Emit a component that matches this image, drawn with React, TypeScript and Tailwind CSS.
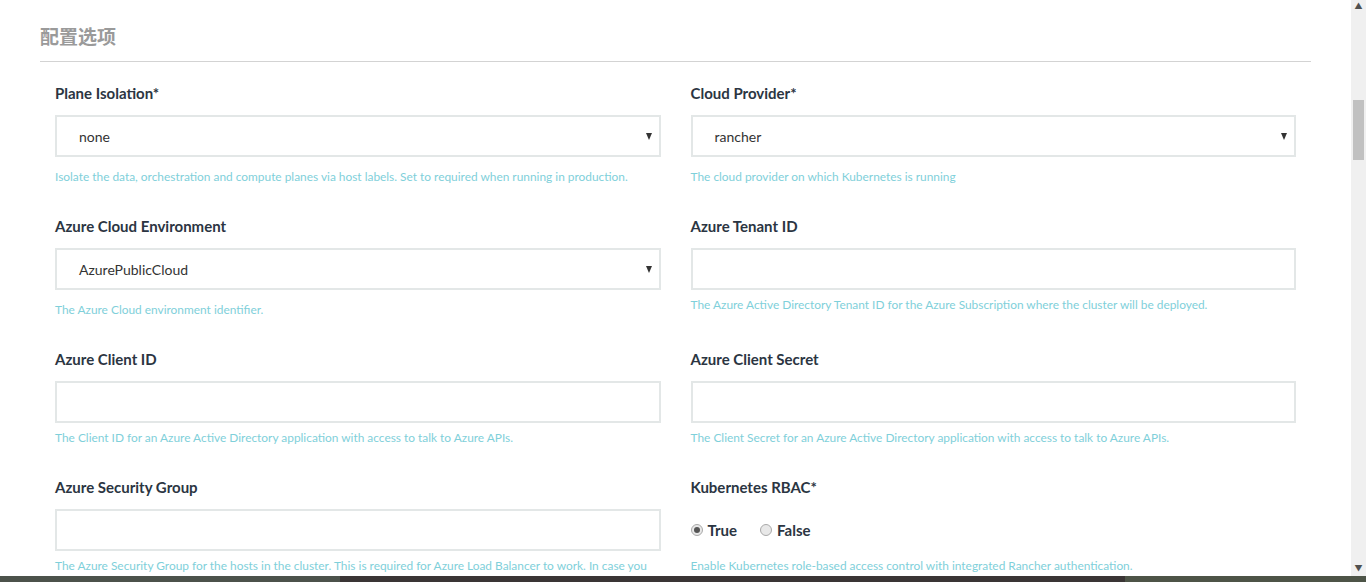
import type { ReactNode } from 'react';

const font = { fontFamily: 'Lato, "Noto Sans CJK SC", sans-serif' };

function Label({ children }: { children: ReactNode }) {
  return <div className="h-5 text-[15px] leading-5 font-bold text-[#2b3542]">{children}</div>;
}

function Help({ children, extra }: { children: ReactNode; extra?: boolean }) {
  return (
    <p className={`${extra ? 'mt-[11px]' : 'mt-[6px]'} text-[11.9px] leading-[18px] text-[#7fd0da]`}>{children}</p>
  );
}

function SelectBox({ value }: { value: string }) {
  return (
    <div className="flex h-[42px] items-center justify-between border-2 border-[#e3e7e7] bg-white pl-[22px] pr-[7px]">
      <span className="text-[14px] text-[#333]">{value}</span>
      <span className="h-0 w-0 border-x-[3.5px] border-t-[7px] border-x-transparent border-t-[#333]" />
    </div>
  );
}

function TextBox() {
  return <div className="h-[42px] border-2 border-[#e3e7e7] bg-white" />;
}

function Field({ label, help, select }: { label: string; help: string; select?: string }) {
  return (
    <div className="px-[15px]">
      <Label>{label}</Label>
      <div className="mt-3">{select ? <SelectBox value={select} /> : <TextBox />}</div>
      <Help extra={!!select}>{help}</Help>
    </div>
  );
}

function Radio({ checked, label }: { checked?: boolean; label: string }) {
  return (
    <div className="flex items-center gap-[5px]">
      <span className="flex h-3 w-3 items-center justify-center rounded-full border border-[#a9a9a9] bg-[#e8e8e8]">
        {checked && <span className="h-[6px] w-[6px] rounded-full bg-[#555]" />}
      </span>
      <span className="text-[15px] font-bold text-[#2b3542]">{label}</span>
    </div>
  );
}

export default function App() {
  return (
    <div className="w-[1366px] overflow-hidden bg-white" style={font}>
      <div className="flex h-[576px]">
        <div className="flex-1 overflow-hidden px-10 pt-[25px]">
          <h2 className="text-[19px] leading-6 font-bold text-[#9a9a9a]">配置选项</h2>
          <div className="mt-[12px] h-px bg-[#d3d3d3]" />

          <div className="pt-[21px]">
            <div className="mb-[30px] grid grid-cols-2">
              <Field label="Plane Isolation*" select="none" help="Isolate the data, orchestration and compute planes via host labels. Set to required when running in production." />
              <Field label="Cloud Provider*" select="rancher" help="The cloud provider on which Kubernetes is running" />
            </div>
            <div className="mb-[30px] grid grid-cols-2 items-start">
              <Field label="Azure Cloud Environment" select="AzurePublicCloud" help="The Azure Cloud environment identifier." />
              <Field label="Azure Tenant ID" help="The Azure Active Directory Tenant ID for the Azure Subscription where the cluster will be deployed." />
            </div>
            <div className="mb-[30px] grid grid-cols-2">
              <Field label="Azure Client ID" help="The Client ID for an Azure Active Directory application with access to talk to Azure APIs." />
              <Field label="Azure Client Secret" help="The Client Secret for an Azure Active Directory application with access to talk to Azure APIs." />
            </div>
            <div className="grid grid-cols-2 items-start">
              <Field label="Azure Security Group" help="The Azure Security Group for the hosts in the cluster. This is required for Azure Load Balancer to work. In case you don't specify a security group, the hosts will use the default one." />
              <div className="px-[15px]">
                <Label>Kubernetes RBAC*</Label>
                <div className="mt-3 flex h-[42px] items-center gap-[23px]">
                  <Radio checked label="True" />
                  <Radio label="False" />
                </div>
                <Help>Enable Kubernetes role-based access control with integrated Rancher authentication.</Help>
              </div>
            </div>
          </div>
        </div>

        <div className="relative flex w-[15px] flex-col items-center bg-[#f0f0f0]">
          <span className="mt-[2px] text-[8px] leading-[8px] text-[#505050]">▲</span>
          <div className="mt-[90px] h-[60px] w-[11px] bg-[#c1c1c1]" />
          <span className="mt-auto mb-[4px] text-[8px] leading-[8px] text-[#505050]">▼</span>
        </div>
      </div>
      <div className="flex h-[6px]">
        <div className="w-[340px] bg-[#4c524b]" />
        <div className="w-[785px] bg-[#3a3535]" />
        <div className="flex-1 bg-[#4d5447]" />
      </div>
    </div>
  );
}
